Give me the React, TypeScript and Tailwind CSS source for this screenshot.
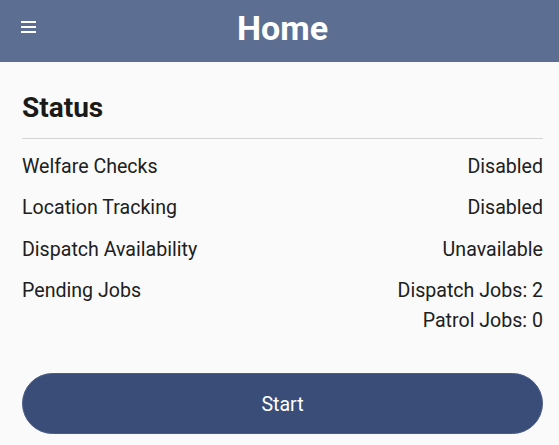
import React from "react";

const rows: { label: string; values: string[] }[] = [
  { label: "Welfare Checks", values: ["Disabled"] },
  { label: "Location Tracking", values: ["Disabled"] },
  { label: "Dispatch Availability", values: ["Unavailable"] },
  { label: "Pending Jobs", values: ["Dispatch Jobs: 2", "Patrol Jobs: 0"] },
];

export default function App() {
  return (
    <div className="min-h-[445px] bg-[#fafafa] font-['Roboto',sans-serif] text-[#202020]">
      {/* Header */}
      <header className="relative flex h-[62px] items-center justify-center bg-[#5d6e93] pb-[6px] pl-[6px]">
        <button className="absolute left-[21px] top-[21px] flex h-[12px] w-[15px] flex-col justify-between">
          <span className="block h-[2px] w-full bg-white" />
          <span className="block h-[2px] w-full bg-white" />
          <span className="block h-[2px] w-full bg-white" />
        </button>
        <h1 className="text-[34px] font-bold leading-none text-white">Home</h1>
      </header>

      <main className="pl-[22px] pr-[16px] pt-[29px]">
        <h2 className="text-[28px] font-bold leading-[34px] text-[#1a1a1a]">Status</h2>
        <div className="mt-[13px] h-px bg-[#d4d4d4]" />

        <div className="mt-[16px] flex flex-col gap-[18.3px]">
          {rows.map((row) => (
            <div key={row.label} className="flex justify-between text-[19.6px] leading-[23px]">
              <span>{row.label}</span>
              <div className="flex flex-col items-end gap-[7px]">
                {row.values.map((v) => (
                  <span key={v}>{v}</span>
                ))}
              </div>
            </div>
          ))}
        </div>

        <button className="mt-[41px] flex h-[61px] w-full items-center justify-center rounded-full border border-[#4a5d88] bg-[#3a4d78] pt-[3px] text-[19.6px] text-white">
          Start
        </button>
      </main>
    </div>
  );
}
